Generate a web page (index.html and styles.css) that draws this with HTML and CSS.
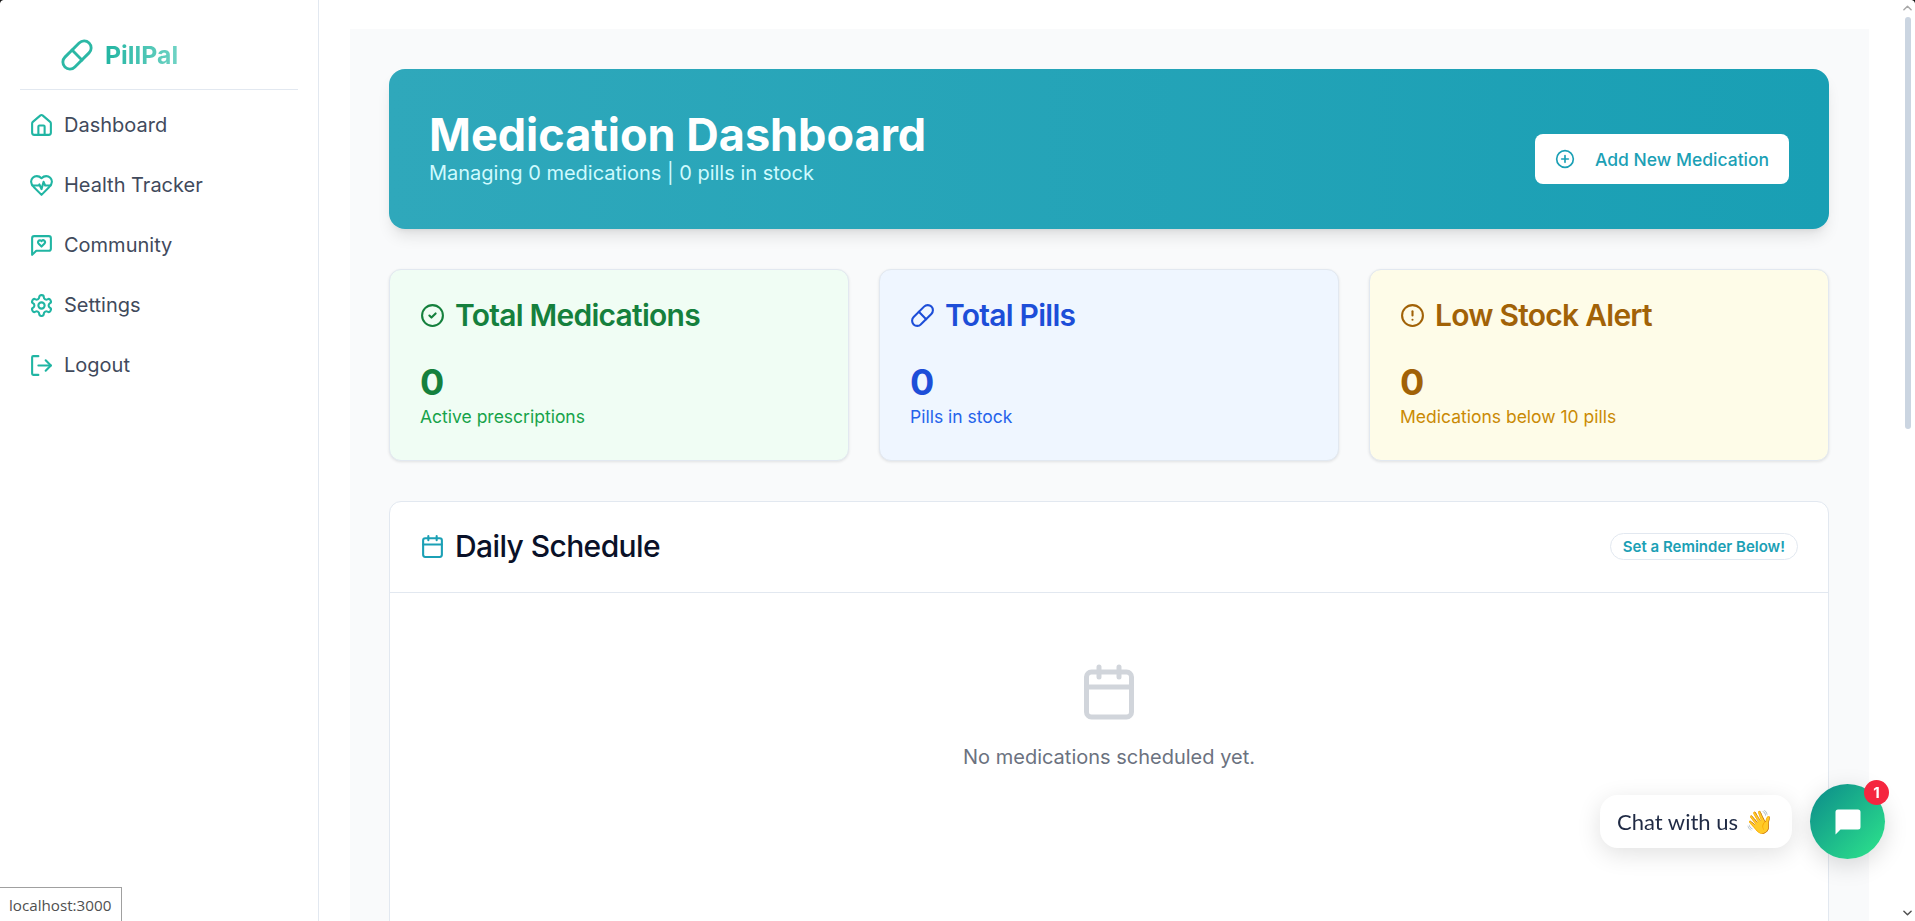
FILE: index.html
```html
<!DOCTYPE html>
<html>
<head>
  <meta charset="UTF-8" />
  <title>PillPal</title>
  <link rel="stylesheet" href="styles.css">
</head>
<body>
  <aside class="sidebar">
    <div class="logo">
      <svg class="logo-icon" viewBox="0 0 24 24"><path d="m10.5 20.5 10-10a4.95 4.95 0 1 0-7-7l-10 10a4.95 4.95 0 1 0 7 7Z"/><path d="m8.5 8.5 7 7"/></svg>
      <span class="logo-text">PillPal</span>
    </div>
    <ul class="menu">
      <li>
        <svg viewBox="0 0 24 24"><path d="M3 10a2 2 0 0 1 .7-1.5l7-6a2 2 0 0 1 2.6 0l7 6A2 2 0 0 1 21 10v9a2 2 0 0 1-2 2H5a2 2 0 0 1-2-2z"/><path d="M15 21v-8a1 1 0 0 0-1-1h-4a1 1 0 0 0-1 1v8"/></svg>
        Dashboard
      </li>
      <li>
        <svg viewBox="0 0 24 24"><path d="M19 14c1.49-1.46 3-3.21 3-5.5A5.5 5.5 0 0 0 16.5 3c-1.76 0-3 .5-4.5 2-1.5-1.5-2.74-2-4.5-2A5.5 5.5 0 0 0 2 8.5c0 2.3 1.5 4.05 3 5.5l7 7Z"/><path d="M3.22 12H9.5l.5-1 2 4.5 2-7 1.5 3.5h5.27"/></svg>
        Health Tracker
      </li>
      <li>
        <svg viewBox="0 0 24 24"><path d="M21 15a2 2 0 0 1-2 2H7l-4 4V5a2 2 0 0 1 2-2h14a2 2 0 0 1 2 2z"/><path d="M14.8 7.5a1.84 1.84 0 0 0-2.6 0l-.2.3-.3-.3a1.84 1.84 0 1 0-2.4 2.8L12 13l2.7-2.7c.9-.9.8-2.1.1-2.8"/></svg>
        Community
      </li>
      <li>
        <svg viewBox="0 0 24 24"><path d="M12.22 2h-.44a2 2 0 0 0-2 2v.18a2 2 0 0 1-1 1.73l-.43.25a2 2 0 0 1-2 0l-.15-.08a2 2 0 0 0-2.73.73l-.22.38a2 2 0 0 0 .73 2.73l.15.1a2 2 0 0 1 1 1.72v.51a2 2 0 0 1-1 1.74l-.15.09a2 2 0 0 0-.73 2.73l.22.38a2 2 0 0 0 2.73.73l.15-.08a2 2 0 0 1 2 0l.43.25a2 2 0 0 1 1 1.73V20a2 2 0 0 0 2 2h.44a2 2 0 0 0 2-2v-.18a2 2 0 0 1 1-1.73l.43-.25a2 2 0 0 1 2 0l.15.08a2 2 0 0 0 2.73-.73l.22-.39a2 2 0 0 0-.73-2.73l-.15-.08a2 2 0 0 1-1-1.74v-.5a2 2 0 0 1 1-1.74l.15-.09a2 2 0 0 0 .73-2.73l-.22-.38a2 2 0 0 0-2.73-.73l-.15.08a2 2 0 0 1-2 0l-.43-.25a2 2 0 0 1-1-1.73V4a2 2 0 0 0-2-2z"/><circle cx="12" cy="12" r="3"/></svg>
        Settings
      </li>
      <li>
        <svg viewBox="0 0 24 24"><path d="M9 3H4a1 1 0 0 0-1 1v16a1 1 0 0 0 1 1h5"/><path d="m16 7 5 5-5 5"/><path d="M21 12H9"/></svg>
        Logout
      </li>
    </ul>
  </aside>

  <main class="content">
    <div class="panel">
      <section class="hero">
        <div>
          <h1>Medication Dashboard</h1>
          <p>Managing 0 medications | 0 pills in stock</p>
        </div>
        <button class="add-btn">
          <svg viewBox="0 0 24 24"><circle cx="12" cy="12" r="10"/><path d="M8 12h8"/><path d="M12 8v8"/></svg>
          Add New Medication
        </button>
      </section>

      <section class="stats">
        <div class="stat green">
          <h3>
            <svg viewBox="0 0 24 24"><circle cx="12" cy="12" r="10"/><path d="m9 12 2 2 4-4"/></svg>
            Total Medications
          </h3>
          <div class="stat-num">0</div>
          <p>Active prescriptions</p>
        </div>
        <div class="stat blue">
          <h3>
            <svg viewBox="0 0 24 24"><path d="m10.5 20.5 10-10a4.95 4.95 0 1 0-7-7l-10 10a4.95 4.95 0 1 0 7 7Z"/><path d="m8.5 8.5 7 7"/></svg>
            Total Pills
          </h3>
          <div class="stat-num">0</div>
          <p>Pills in stock</p>
        </div>
        <div class="stat amber">
          <h3>
            <svg viewBox="0 0 24 24"><circle cx="12" cy="12" r="10"/><path d="M12 8v4"/><path d="M12 16h.01"/></svg>
            Low Stock Alert
          </h3>
          <div class="stat-num">0</div>
          <p>Medications below 10 pills</p>
        </div>
      </section>

      <section class="schedule">
        <div class="schedule-head">
          <h2>
            <svg viewBox="0 0 24 24"><path d="M8 2v4"/><path d="M16 2v4"/><rect x="3" y="4" width="18" height="18" rx="2"/><path d="M3 10h18"/></svg>
            Daily Schedule
          </h2>
          <span class="pill-note">Set a Reminder Below!</span>
        </div>
        <div class="empty">
          <svg viewBox="0 0 24 24"><path d="M8 2v4"/><path d="M16 2v4"/><rect x="3" y="4" width="18" height="18" rx="2"/><path d="M3 10h18"/></svg>
          <p>No medications scheduled yet.</p>
        </div>
      </section>
    </div>
  </main>

  <div class="scrollbar">
    <svg class="arrow" viewBox="0 0 10 6"><path d="M1 5l4-4 4 4"/></svg>
    <div class="thumb"></div>
    <svg class="arrow arrow-down" viewBox="0 0 10 6"><path d="M1 1l4 4 4-4"/></svg>
  </div>

  <!-- chat widget, floats over the page -->
  <div class="chat">
    <div class="chat-label">Chat with us <span class="wave">👋</span></div>
    <div class="chat-btn">
      <svg viewBox="0 0 24 24"><path d="M4 2h16a2 2 0 0 1 2 2v12a2 2 0 0 1-2 2H6l-4 4V4a2 2 0 0 1 2-2Z"/></svg>
      <span class="badge">1</span>
    </div>
  </div>

  <div class="status-tip">localhost:3000</div>
  <div class="corner corner-left"></div>
  <div class="corner corner-right"></div>
</body>
</html>
```

FILE: styles.css
```css
* {
  margin: 0;
  padding: 0;
  box-sizing: border-box;
}
html, body {
  height: 100%;
  overflow: hidden;
}
body {
  display: flex;
  background: white;
  font-family: Inter, "Liberation Sans", sans-serif;
}
svg {
  fill: none;
  stroke: currentColor;
  stroke-width: 2;
  stroke-linecap: round;
  stroke-linejoin: round;
  flex-shrink: 0;
}

/* sidebar */
.sidebar {
  width: 319px;
  flex-shrink: 0;
  padding: 0 20px;
  border-right: 1px solid #e2e8f0;
}
.logo {
  height: 90px;
  display: flex;
  align-items: center;
  gap: 11px;
  padding: 20px 0 0 40px;
  border-bottom: 1px solid #e2e8f0;
}
.logo-icon {
  width: 34px;
  height: 34px;
  color: #2bb8a5;
}
.logo-text {
  font-size: 24.8px;
  font-weight: 700;
  line-height: 32px;
  background: linear-gradient(90deg, #22b5a2, #6fd3c4);
  -webkit-background-clip: text;
  background-clip: text;
  color: transparent;
}
.menu {
  list-style: none;
  padding-top: 5px;
}
.menu li {
  height: 60px;
  display: flex;
  align-items: center;
  gap: 10px;
  padding-left: 9px;
  font-size: 20px;
  color: #414a5c;
}
.menu li svg {
  width: 25px;
  height: 25px;
  color: #20b5a3;
}

/* main */
.content {
  flex: 1;
  min-width: 0;
  padding: 29px 31px 0;
}
.panel {
  height: 100%;
  background: #f9fafb;
  padding: 40px 40px 0 39px;
  overflow: hidden;
}
.hero {
  height: 160px;
  display: flex;
  align-items: center;
  justify-content: space-between;
  padding: 0 40px;
  border-radius: 16px;
  background: linear-gradient(to right, #2fa8bb, #199fb4);
  box-shadow: 0 10px 15px -3px rgba(0, 0, 0, 0.1), 0 4px 6px -4px rgba(0, 0, 0, 0.1);
  color: white;
}
.hero h1 {
  font-size: 45px;
  line-height: 48px;
  font-weight: 700;
}
.hero p {
  font-size: 20px;
  line-height: 28px;
  color: #cffafe;
}
.add-btn {
  width: 254px;
  height: 50px;
  margin-top: 20px;
  display: flex;
  align-items: center;
  gap: 20px;
  padding-left: 20px;
  border: none;
  border-radius: 8px;
  background: white;
  color: #1ba0b5;
  font-family: Inter, sans-serif;
  font-size: 17.5px;
  font-weight: 500;
}
.add-btn svg {
  width: 20px;
  height: 20px;
}

/* stat cards */
.stats {
  display: grid;
  grid-template-columns: repeat(3, 1fr);
  gap: 30px;
  margin-top: 40px;
}
.stat {
  height: 192px;
  padding: 27px 30px 0;
  border: 1px solid #e2e8f0;
  border-radius: 12px;
  box-shadow: 0 1px 3px rgba(0, 0, 0, 0.1);
}
.stat h3 {
  display: flex;
  align-items: center;
  gap: 10px;
  font-size: 30px;
  line-height: 36px;
  font-weight: 600;
  letter-spacing: -0.75px;
}
.stat h3 svg {
  width: 25px;
  height: 25px;
}
.stat-num {
  margin-top: 29px;
  font-size: 36px;
  line-height: 40px;
  font-weight: 700;
}
.stat p {
  font-size: 17.5px;
  line-height: 24px;
  margin-top: 3px;
}
.green { background: #f0fdf4; color: #15803d; }
.green p { color: #16a34a; }
.blue { background: #eff6ff; color: #1d4ed8; }
.blue p { color: #2563eb; }
.amber { background: #fefce8; color: #a16207; }
.amber p { color: #ca8a04; }

/* schedule */
.schedule {
  margin-top: 40px;
  height: 600px;
  background: white;
  border: 1px solid #e2e8f0;
  border-radius: 12px;
}
.schedule-head {
  height: 91px;
  display: flex;
  align-items: center;
  justify-content: space-between;
  padding: 0 30px 2px;
  border-bottom: 1px solid #e2e8f0;
}
.schedule-head h2 {
  display: flex;
  align-items: center;
  gap: 10px;
  font-size: 30px;
  line-height: 36px;
  font-weight: 500;
  letter-spacing: -0.6px;
  color: #0a1128;
}
.schedule-head h2 svg {
  width: 25px;
  height: 25px;
  color: #1ba0b5;
}
.pill-note {
  height: 27px;
  display: flex;
  align-items: center;
  padding: 0 12px;
  border: 1px solid #e2e8f0;
  border-radius: 14px;
  font-size: 15px;
  font-weight: 600;
  color: #1ba0b5;
}
.empty {
  padding-top: 69px;
  display: flex;
  flex-direction: column;
  align-items: center;
  color: #6b7280;
  font-size: 20px;
}
.empty svg {
  width: 60px;
  height: 60px;
  color: #d1d5db;
}
.empty p {
  margin-top: 21px;
  line-height: 28px;
}

/* fake browser scrollbar */
.scrollbar {
  width: 15px;
  flex-shrink: 0;
  background: white;
  display: flex;
  flex-direction: column;
  align-items: center;
}
.arrow {
  width: 9px;
  height: 6px;
  margin-top: 5px;
  color: #a8a8a8;
  stroke-width: 1.6;
}
.arrow-down {
  margin-top: auto;
  margin-bottom: 5px;
  color: #505050;
}
.thumb {
  width: 6px;
  height: 412px;
  margin-top: 6px;
  border-radius: 3px;
  background: #cbd5e1;
}

/* chat widget */
.chat {
  position: fixed;
  right: 30px;
  bottom: 62px;
  display: flex;
  align-items: center;
  gap: 18px;
}
.chat-label {
  height: 53px;
  display: flex;
  align-items: center;
  gap: 7px;
  padding: 0 18px 0 17px;
  background: white;
  border-radius: 18px;
  box-shadow: 0 6px 24px rgba(0, 0, 0, 0.12);
  font-family: Lato, sans-serif;
  font-size: 22px;
  color: #1f2a44;
}
.wave {
  font-size: 23px;
}
.chat-btn {
  width: 75px;
  height: 75px;
  display: flex;
  align-items: center;
  justify-content: center;
  border-radius: 50%;
  background: linear-gradient(135deg, #0b8a8a, #2ee68c);
  box-shadow: 0 6px 24px rgba(0, 0, 0, 0.15);
  position: relative;
}
.chat-btn svg {
  width: 30px;
  height: 30px;
  fill: white;
  stroke: none;
}
.badge {
  position: absolute;
  top: -4px;
  right: -4px;
  width: 25px;
  height: 25px;
  border-radius: 50%;
  background: #f5263f;
  color: white;
  font-size: 15px;
  font-weight: 700;
  display: flex;
  align-items: center;
  justify-content: center;
}

/* browser status tip */
.status-tip {
  position: fixed;
  left: 0;
  bottom: 0;
  height: 34px;
  padding: 0 10px 0 9px;
  display: flex;
  align-items: center;
  background: white;
  border: 1px solid #a0a0a0;
  border-left: none;
  border-bottom: none;
  font-family: "Open Sans", sans-serif;
  font-size: 15.2px;
  color: #505050;
}

/* rounded window corners */
.corner {
  position: fixed;
  top: 0;
  width: 4px;
  height: 4px;
}
.corner-left {
  left: 0;
  background: radial-gradient(circle at bottom right, transparent 3.5px, #111 4.5px);
}
.corner-right {
  right: 0;
  background: radial-gradient(circle at bottom left, transparent 3.5px, #111 4.5px);
}
```
